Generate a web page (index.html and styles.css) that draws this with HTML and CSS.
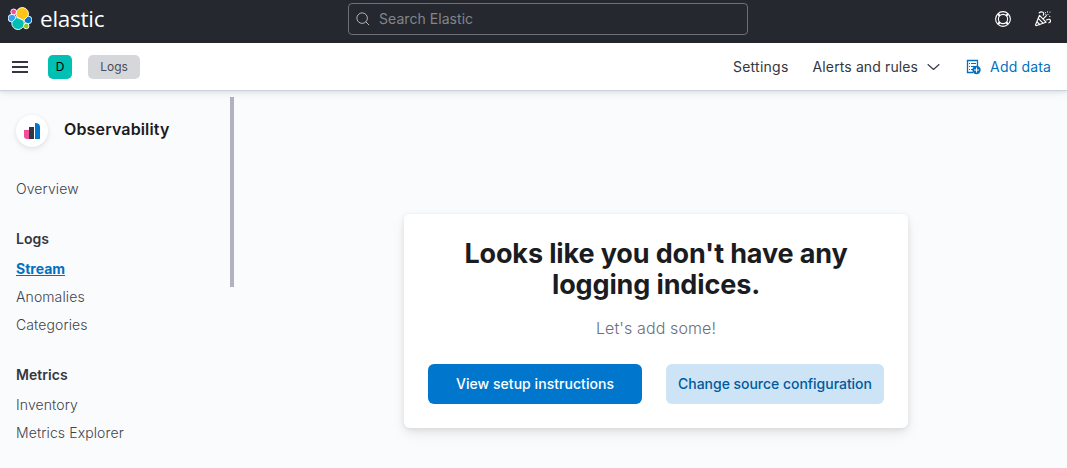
FILE: index.html
```
<!DOCTYPE html>
<html lang="en">
<head>
<meta charset="utf-8">
<title>Stream - Logs - Observability - Elastic</title>
<link rel="stylesheet" href="styles.css">
</head>
<body>
<header class="topbar">
  <a class="brand">
    <svg class="brand-mark" width="24" height="24" viewBox="0 0 24 24" stroke="#fff" stroke-width=".9">
      <circle cx="5.700" cy="4.900" r="2.900" fill="#f04e98"/>
      <circle cx="4" cy="11.200" r="3.900" fill="#36a2ef"/>
      <circle cx="20" cy="12.900" r="3.900" fill="#0077cc"/>
      <circle cx="18.200" cy="19" r="2.800" fill="#93c90e"/>
      <path d="M9 10.200 15.600 13.200 20 9.200A6.200 6.200 0 1 0 8.200 7.800Z" fill="#fec514"/>
      <path d="M8.700 10.400 15.500 13.500A6.200 6.200 0 1 1 3.900 15.200Z" fill="#00bfb3"/>
    </svg>
    <span class="wordmark">elastic</span>
  </a>
  <div class="search">
    <svg width="14" height="14" viewBox="0 0 16 16" fill="none" stroke="#c5c7cc"><circle cx="7" cy="7" r="6"/><path d="m11.200 11.200 3.800 3.800"/></svg>
    <span>Search Elastic</span>
  </div>
  <div class="top-icons">
    <svg width="16" height="16" viewBox="0 0 16 16" fill="none" stroke="#fff"><circle cx="8" cy="8" r="7.400" stroke-width="1.100"/><circle cx="8" cy="8" r="4.600" stroke-width="1.100"/><path d="m3 3 2 2m6 6 2 2m0-10-2 2m-6 6-2 2" stroke-width="2.200"/></svg>
    <svg width="16" height="16" viewBox="0 0 16 16" fill="none" stroke="#fff" stroke-width="1.150" stroke-linecap="round" stroke-linejoin="round"><path d="M4.500 4.300.7 13.500q-.4 1.300.9 1l9.400-3.300ZM3.500 7.700l4.700 4.600M2.200 11l2.600 2.700M4.200 1.900Q5.700.2 7.800 1.200q1.700.9.400 3M8.400 7.600l3-3M11.500 9q3.800-1.800 4 1 0 1.500-1.600 1.800"/><path d="M10.500 1.500v.1M13 3.200v.1M15 1v.1M12.500.8v.1M14.800 5.300v.1M10.900 3.500v.1"/></svg>
  </div>
</header>
<div class="subbar">
  <div class="crumbs">
    <svg class="menu" width="16" height="16" viewBox="0 0 16 16" fill="#343741"><path d="M0 2h16v2H0zM0 7h16v2H0zM0 12h16v2H0z"/></svg>
    <span class="space">D</span>
    <span class="crumb">Logs</span>
  </div>
  <nav class="actions">
    <a class="settings">Settings</a>
    <a class="alerts">Alerts and rules <svg width="16" height="16" viewBox="0 0 16 16" fill="none" stroke="#343741" stroke-width="1.100" stroke-linecap="round" stroke-linejoin="round"><path d="m2 5.500 5.500 5 5.500-5"/></svg></a>
    <a class="add"><svg width="16" height="16" viewBox="0 0 16 16" fill="none" stroke="#0071c2"><path d="M7 13.500H1.500v-12h10V7" stroke-width="1.300"/><path d="M3 4.500h1m1 0h5M3 7.500h1m1 0h4M3 10.500h1m1 0h2"/><circle cx="10.500" cy="11" r="4.200" fill="#0071c2" stroke="none"/><path d="M8 11h5m-2.500-2.500v5" stroke="#fff"/></svg>Add data</a>
  </nav>
</div>
<div class="page">
  <aside class="sidebar">
    <div class="solution">
      <span class="avatar"><svg width="16" height="16" viewBox="0 0 16 16"><path d="M0 7h5v9H3q-3 0-3-3Z" fill="#f04e98"/><path d="M5 4h5v12H5z" fill="#343741"/><path d="M11 0q5 0 5 4v12h-5Z" fill="#0077cc"/></svg></span>
      <strong>Observability</strong>
    </div>
    <nav class="nav">
      <a class="overview">Overview</a>
      <h3>Logs</h3>
      <a class="active">Stream</a>
      <a>Anomalies</a>
      <a class="last">Categories</a>
      <h3>Metrics</h3>
      <a>Inventory</a>
      <a>Metrics Explorer</a>
    </nav>
    <div class="scroll-thumb"></div>
  </aside>
  <main class="content">
    <section class="panel">
      <h1>Looks like you don't have any<br>logging indices.</h1>
      <p>Let's add some!</p>
      <div class="buttons">
        <a class="button primary">View setup instructions</a>
        <a class="button secondary">Change source configuration</a>
      </div>
    </section>
  </main>
</div>
</body>
</html>
```
FILE: styles.css
```
* { box-sizing: border-box; }
body {
  margin: 0;
  height: 468px;
  overflow: hidden;
  display: flex;
  flex-direction: column;
  background: #fafbfd;
  color: #343741;
  font: 14px/20px Inter, "Liberation Sans", sans-serif;
}
svg { display: block; flex: none; }
.topbar {
  flex: none;
  height: 43px;
  padding: 0 16px 5px 8px;
  display: grid;
  grid-template-columns: 340px 400px 1fr;
  align-items: center;
  background: #25282f;
  color: #fff;
}
.brand { display: flex; align-items: center; gap: 8px; }
.wordmark { font: 22.5px/32px "Open Sans", sans-serif; letter-spacing: -.25px; }
.search {
  height: 32px;
  padding: 0 7px;
  display: flex;
  align-items: center;
  gap: 9px;
  border: 1px solid #6e7076;
  border-radius: 4px;
  color: #82858b;
  letter-spacing: .05px;
}
.top-icons { display: flex; justify-content: flex-end; gap: 24px; }
.subbar {
  flex: none;
  z-index: 1;
  height: 48px;
  padding: 0 16px 0 12px;
  display: flex;
  align-items: center;
  justify-content: space-between;
  background: #fff;
  border-bottom: 1px solid #cbd2e0;
  box-shadow: 0 1px 4px rgba(0, 0, 0, .1), 0 3px 10px rgba(0, 0, 0, .05);
}
.crumbs, .actions, .actions a { display: flex; align-items: center; }
.space {
  width: 24px;
  margin: 0 16px 0 20px;
  border-radius: 5px;
  background: #00bfb3;
  color: #000;
  font-size: 12px;
  line-height: 24px;
  text-align: center;
}
.crumb {
  width: 52px;
  border-radius: 5px;
  background: #d6d7da;
  color: #4a4d55;
  font-size: 12px;
  line-height: 24px;
  text-align: center;
}
.actions { gap: 24px; }
.settings { letter-spacing: .25px; }
.alerts { gap: 8px; letter-spacing: .12px; }
.add { gap: 8px; color: #0071c2; letter-spacing: .15px; }
.page { flex: 1; min-height: 0; display: flex; }
.sidebar {
  flex: none;
  width: 234px;
  display: grid;
  grid-template-columns: 1fr 4px;
  grid-template-rows: 88px 1fr;
}
.solution {
  padding: 24px 0 0 16px;
  display: flex;
  align-items: flex-start;
  gap: 16px;
  color: #1a1c21;
  font-size: 16px;
  line-height: 29px;
}
.solution strong { font-weight: 600; letter-spacing: .15px; }
.avatar {
  width: 32px;
  height: 32px;
  display: grid;
  place-items: center;
  border-radius: 50%;
  background: #fff;
  box-shadow: 0 1px 4px rgba(0, 0, 0, .08), 0 3px 8px rgba(0, 0, 0, .05);
}
.nav { padding-left: 16px; display: flex; flex-direction: column; align-items: flex-start; }
.nav a { margin-bottom: 8px; color: #40434b; font-weight: 350; letter-spacing: .11px; }
.nav .overview { margin-bottom: 30px; }
.nav h3 { margin: 0 0 10px; font-size: 14px; font-weight: 600; letter-spacing: .05px; }
.nav .last { margin-bottom: 30px; }
.nav .active { color: #0071c2; font-weight: 700; letter-spacing: 0; text-decoration: underline; }
.scroll-thumb {
  grid-column: 2;
  grid-row: 1 / 3;
  height: 190px;
  margin-top: 6px;
  background: #b0b3bf;
}
.content { flex: 1; padding: 123px 0 0 170px; }
.panel {
  width: 504px;
  height: 214px;
  padding: 24px;
  border-radius: 6px;
  background: #fff;
  box-shadow: 0 1px 5px rgba(0, 0, 0, .06), 0 4px 8px rgba(0, 0, 0, .06), 0 6px 16px rgba(0, 0, 0, .05);
  text-align: center;
}
.panel h1 { margin: 0 0 16px; color: #1a1c21; font-size: 27px; line-height: 31px; font-weight: 700; letter-spacing: -.13px; }
.panel p { margin: 0 0 24px; color: #69707d; font-size: 16px; line-height: 24px; font-weight: 350; letter-spacing: .1px; }
.buttons { display: flex; justify-content: space-between; }
.button { border-radius: 6px; line-height: 40px; font-weight: 500; }
.primary { width: 214px; background: #0077cc; color: #fff; letter-spacing: .05px; }
.secondary { width: 218px; background: #cce4f5; color: #005a9e; letter-spacing: -.03px; }
```
